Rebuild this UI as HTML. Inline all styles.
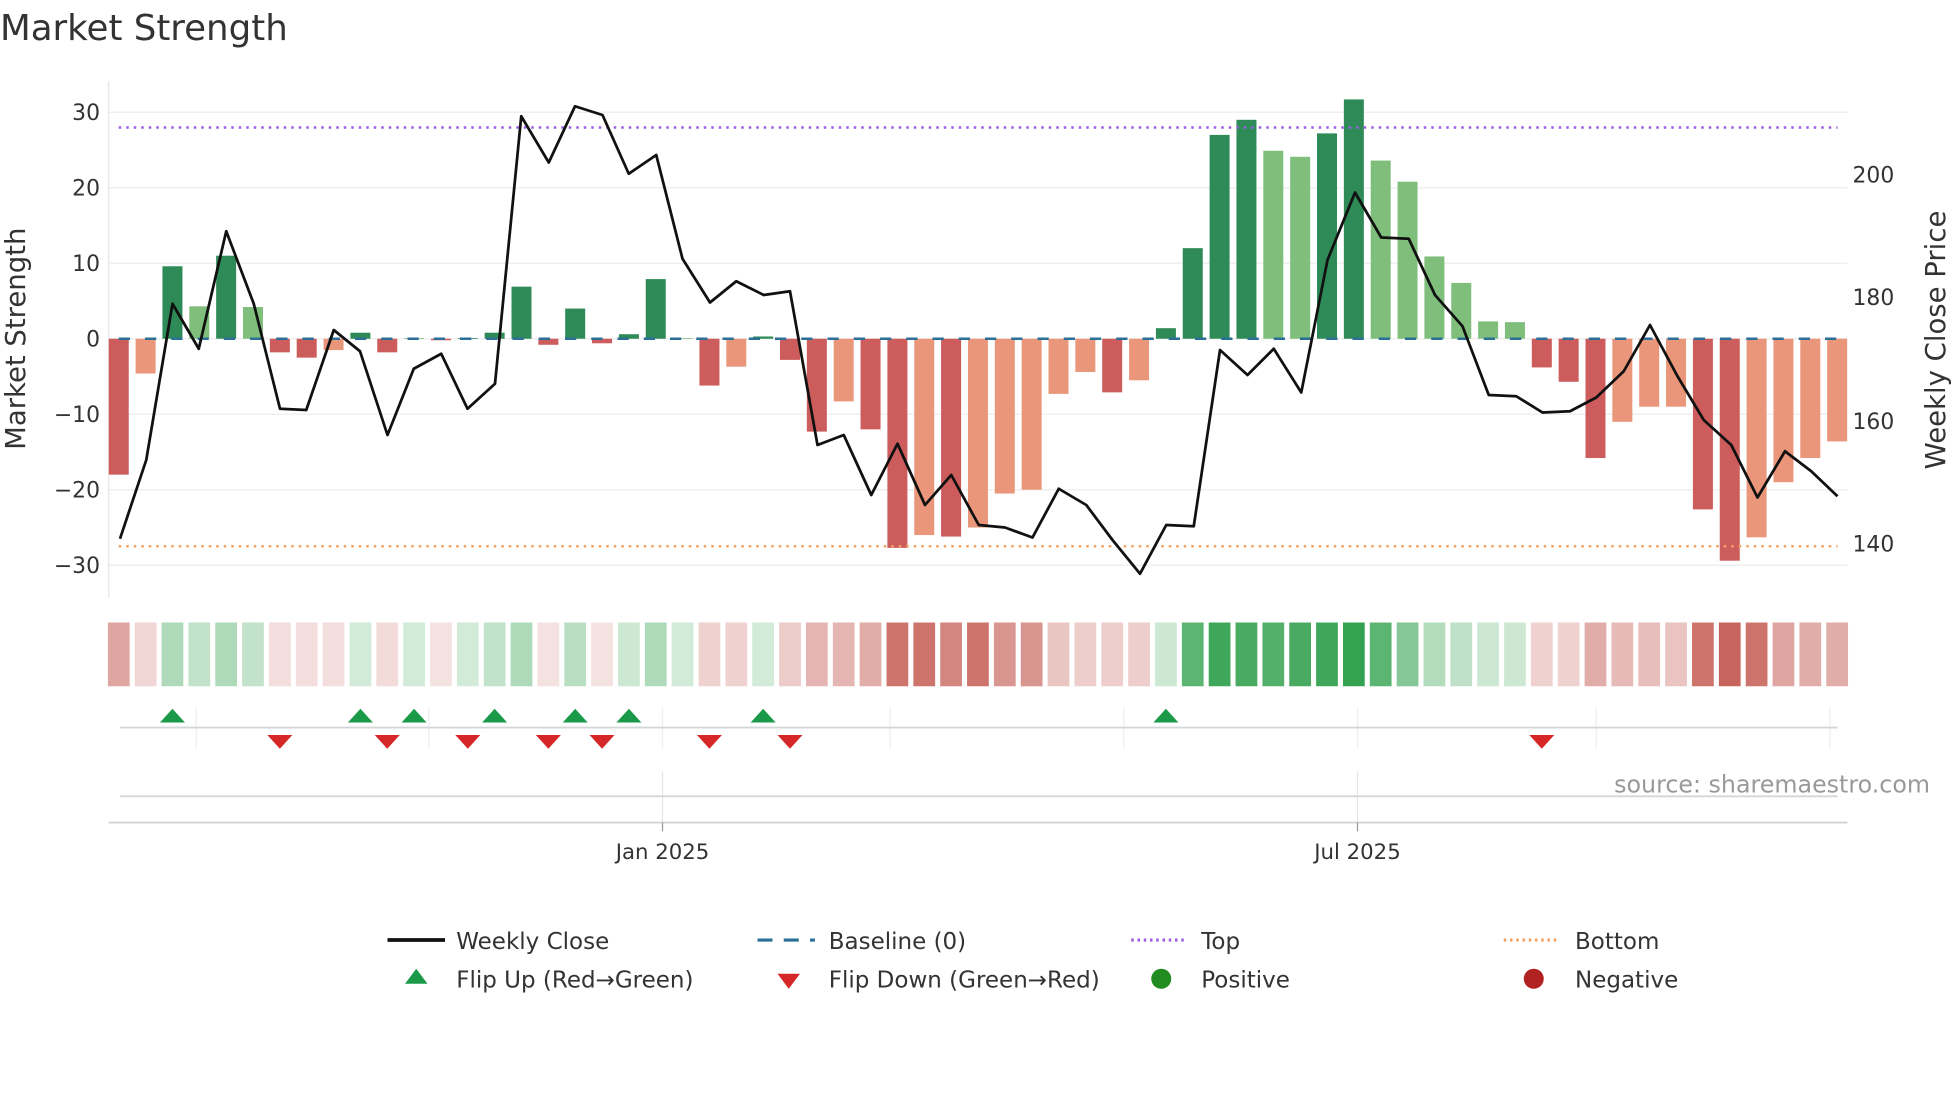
<!DOCTYPE html>
<html><head><meta charset="utf-8"><style>
html,body{margin:0;padding:0;background:#fff;width:1960px;height:1102px;overflow:hidden}
svg{display:block}
text{font-family:"DejaVu Sans","Liberation Sans",sans-serif;fill:#333}
</style></head><body>
<svg id="s" width="1960" height="1102" viewBox="0 0 1568 881.6" xmlns="http://www.w3.org/2000/svg">
<text x="0" y="32" font-size="28.5">Market Strength</text>
<g id="grid"></g>
<line x1="87" y1="65" x2="87" y2="478" stroke="#e6e6e6" stroke-width="1"/>
<g id="bars"></g>
<line x1="95" y1="102" x2="1470" y2="102" stroke="#9b5de5" stroke-width="2" stroke-dasharray="2,4"/>
<line x1="95" y1="437" x2="1470" y2="437" stroke="#f4a261" stroke-width="2" stroke-dasharray="2,4"/>
<line x1="95" y1="271" x2="1470" y2="271" stroke="#2a6f97" stroke-width="2" stroke-dasharray="9,12"/>
<polyline id="pl" fill="none" stroke="#111" stroke-width="2.2" stroke-linejoin="round"/>
<g id="heat"></g>
<g id="mk"></g>
<text x="1544" y="634" font-size="19" text-anchor="end" style="fill:#999">source: sharemaestro.com</text>
<line x1="87" y1="658" x2="1478" y2="658" stroke="#d0d4d6" stroke-width="1.5"/>
<line x1="530" y1="658" x2="530" y2="665" stroke="#999"/>
<line x1="1086" y1="658" x2="1086" y2="665" stroke="#999"/>
<text x="530" y="687" font-size="17" text-anchor="middle">Jan 2025</text>
<text x="1086" y="687" font-size="17" text-anchor="middle">Jul 2025</text>
<text transform="translate(20,271) rotate(-90)" font-size="22" text-anchor="middle">Market Strength</text>
<text transform="translate(1556,272) rotate(-90)" font-size="22" text-anchor="middle">Weekly Close Price</text>
<g font-size="18.4">
<line x1="310" y1="752" x2="356" y2="752" stroke="#111" stroke-width="3"/>
<text x="365" y="759">Weekly Close</text>
<line x1="606" y1="752" x2="652" y2="752" stroke="#2a6f97" stroke-width="2.5" stroke-dasharray="12,9"/>
<text x="663" y="759">Baseline (0)</text>
<line x1="905" y1="752" x2="950" y2="752" stroke="#9b5de5" stroke-width="2.5" stroke-dasharray="2,3"/>
<text x="961" y="759">Top</text>
<line x1="1203" y1="752" x2="1248" y2="752" stroke="#f4a261" stroke-width="2.5" stroke-dasharray="2,3"/>
<text x="1260" y="759">Bottom</text>
<polygon points="333,775 342,787 324,787" fill="#1a9a48"/>
<text x="365" y="790">Flip Up (Red→Green)</text>
<polygon points="622,779 640,779 631,791" fill="#d62728"/>
<text x="663" y="790">Flip Down (Green→Red)</text>
<circle cx="929" cy="783" r="8" fill="#228b22"/>
<text x="961" y="790">Positive</text>
<circle cx="1227" cy="783" r="8" fill="#b22222"/>
<text x="1260" y="790">Negative</text>
</g>
</svg>
<script>
var NS="http://www.w3.org/2000/svg";
function el(p,t,a){var e=document.createElementNS(NS,t);for(var k in a)e.setAttribute(k,a[k]);p.appendChild(e);return e;}
var g=document.getElementById('grid');
var y0=271,k=6.04;
for(var v=-30;v<=30;v+=10){var y=y0-v*k;el(g,'line',{x1:87,x2:1478,y1:y,y2:y,stroke:'#efefef','stroke-width':1.2});
var t=el(g,'text',{x:80,y:y+6,'font-size':17.5,'text-anchor':'end'});t.textContent=(v<0?'\u2212'+(-v):v);}
[[200,140],[180,238],[160,337],[140,435]].forEach(function(p){var t=el(g,'text',{x:1482,y:p[1]+6,'font-size':17.5});t.textContent=p[0];});
var B=[[-18,'R'],[-4.6,'S'],[9.6,'D'],[4.3,'L'],[11,'D'],[4.2,'L'],[-1.8,'R'],[-2.5,'R'],[-1.5,'S'],[0.8,'D'],[-1.8,'R'],[0.1,'L'],[-0.2,'R'],[0.1,'D'],[0.8,'D'],[6.9,'D'],[-0.8,'R'],[4,'D'],[-0.6,'R'],[0.6,'D'],[7.9,'D'],[0.1,'L'],[-6.2,'R'],[-3.7,'S'],[0.3,'D'],[-2.8,'R'],[-12.3,'R'],[-8.3,'S'],[-12,'R'],[-27.7,'R'],[-26,'S'],[-26.2,'R'],[-25,'S'],[-20.5,'S'],[-20,'S'],[-7.3,'S'],[-4.4,'S'],[-7.1,'R'],[-5.5,'S'],[1.4,'D'],[12,'D'],[27,'D'],[29,'D'],[24.9,'L'],[24.1,'L'],[27.2,'D'],[31.7,'D'],[23.6,'L'],[20.8,'L'],[10.9,'L'],[7.4,'L'],[2.3,'L'],[2.2,'L'],[-3.8,'R'],[-5.7,'R'],[-15.8,'R'],[-11,'S'],[-9,'S'],[-9,'S'],[-22.6,'R'],[-29.4,'R'],[-26.3,'S'],[-19,'S'],[-15.8,'S'],[-13.6,'S']];
var H=[.55,.25,.4,.3,.4,.3,.2,.2,.2,.22,.22,.22,.18,.22,.3,.4,.18,.35,.18,.25,.4,.22,.28,.28,.22,.32,.45,.45,.5,.85,.85,.75,.85,.65,.65,.35,.3,.3,.3,.25,.8,.95,.9,.85,.9,.95,1,.8,.6,.38,.32,.25,.25,.28,.28,.5,.42,.4,.36,.85,.95,.85,.55,.5,.5];
var C={D:'#2e8b57',L:'#7fbf7b',R:'#cd5c5c',S:'#e9967a'};
var bg=document.getElementById('bars'),hg=document.getElementById('heat');
B.forEach(function(b,i){var x=95+21.48*i;var v=b[0];var h=Math.abs(v)*k;var y=v>=0?y0-h:y0;
el(bg,'rect',{x:x-8,y:y,width:16,height:Math.max(h,0.5),fill:C[b[1]]});
var pos=v>0||(v>=0&&b[1]!='R'&&b[1]!='S');
var c=pos?'rgb(52,162,80)':'rgb(196,92,84)';
el(hg,'rect',{x:x-8.7,y:498,width:17.4,height:51,fill:c,'fill-opacity':H[i]});});
var L=[[96,431],[117,368],[138,243],[159,279],[181,185],[203,243],[224,327],[245,328],[267,264],[288,281],[310,348],[331,295],[353,283],[374,327],[396,307],[417,93],[439,130],[460,85],[482,92],[503,139],[525,124],[546,207],[568,242],[589,225],[611,236],[632,233],[654,356],[675,348],[697,396],[718,355],[740,404],[761,380],[783,420],[804,422],[826,430],[847,391],[869,404],[890,432],[912,459],[933,420],[955,421],[976,280],[998,300],[1019,279],[1041,314],[1062,208],[1084,154],[1105,190],[1127,191],[1148,236],[1170,261],[1191,316],[1213,317],[1234,330],[1256,329],[1277,318],[1299,297],[1320,260],[1342,301],[1363,336],[1385,356],[1406,398],[1428,361],[1449,377],[1470,397]];
document.getElementById('pl').setAttribute('points',L.map(function(p){return p.join(',')}).join(' '));
var m=document.getElementById('mk');
[157,343,530,712,899,1086,1277,1464].forEach(function(x){el(m,'line',{x1:x,x2:x,y1:566,y2:599,stroke:'#eceeef'});});
[530,1086].forEach(function(x){el(m,'line',{x1:x,x2:x,y1:617,y2:658,stroke:'#e4e6e7'});});
el(m,'line',{x1:96,x2:1470,y1:582,y2:582,stroke:'#d3d7d9','stroke-width':1.5});
el(m,'line',{x1:96,x2:1470,y1:637,y2:637,stroke:'#d3d7d9','stroke-width':1.5});
[2,9,11,14,17,19,24,39].forEach(function(i){var x=95+21.48*i;el(m,'polygon',{points:(x)+',567 '+(x+10)+',578 '+(x-10)+',578',fill:'#1a9a48'});});
[6,10,13,16,18,22,25,53].forEach(function(i){var x=95+21.48*i;el(m,'polygon',{points:(x-10)+',588 '+(x+10)+',588 '+x+',599',fill:'#d62728'});});
</script>
</body></html>
